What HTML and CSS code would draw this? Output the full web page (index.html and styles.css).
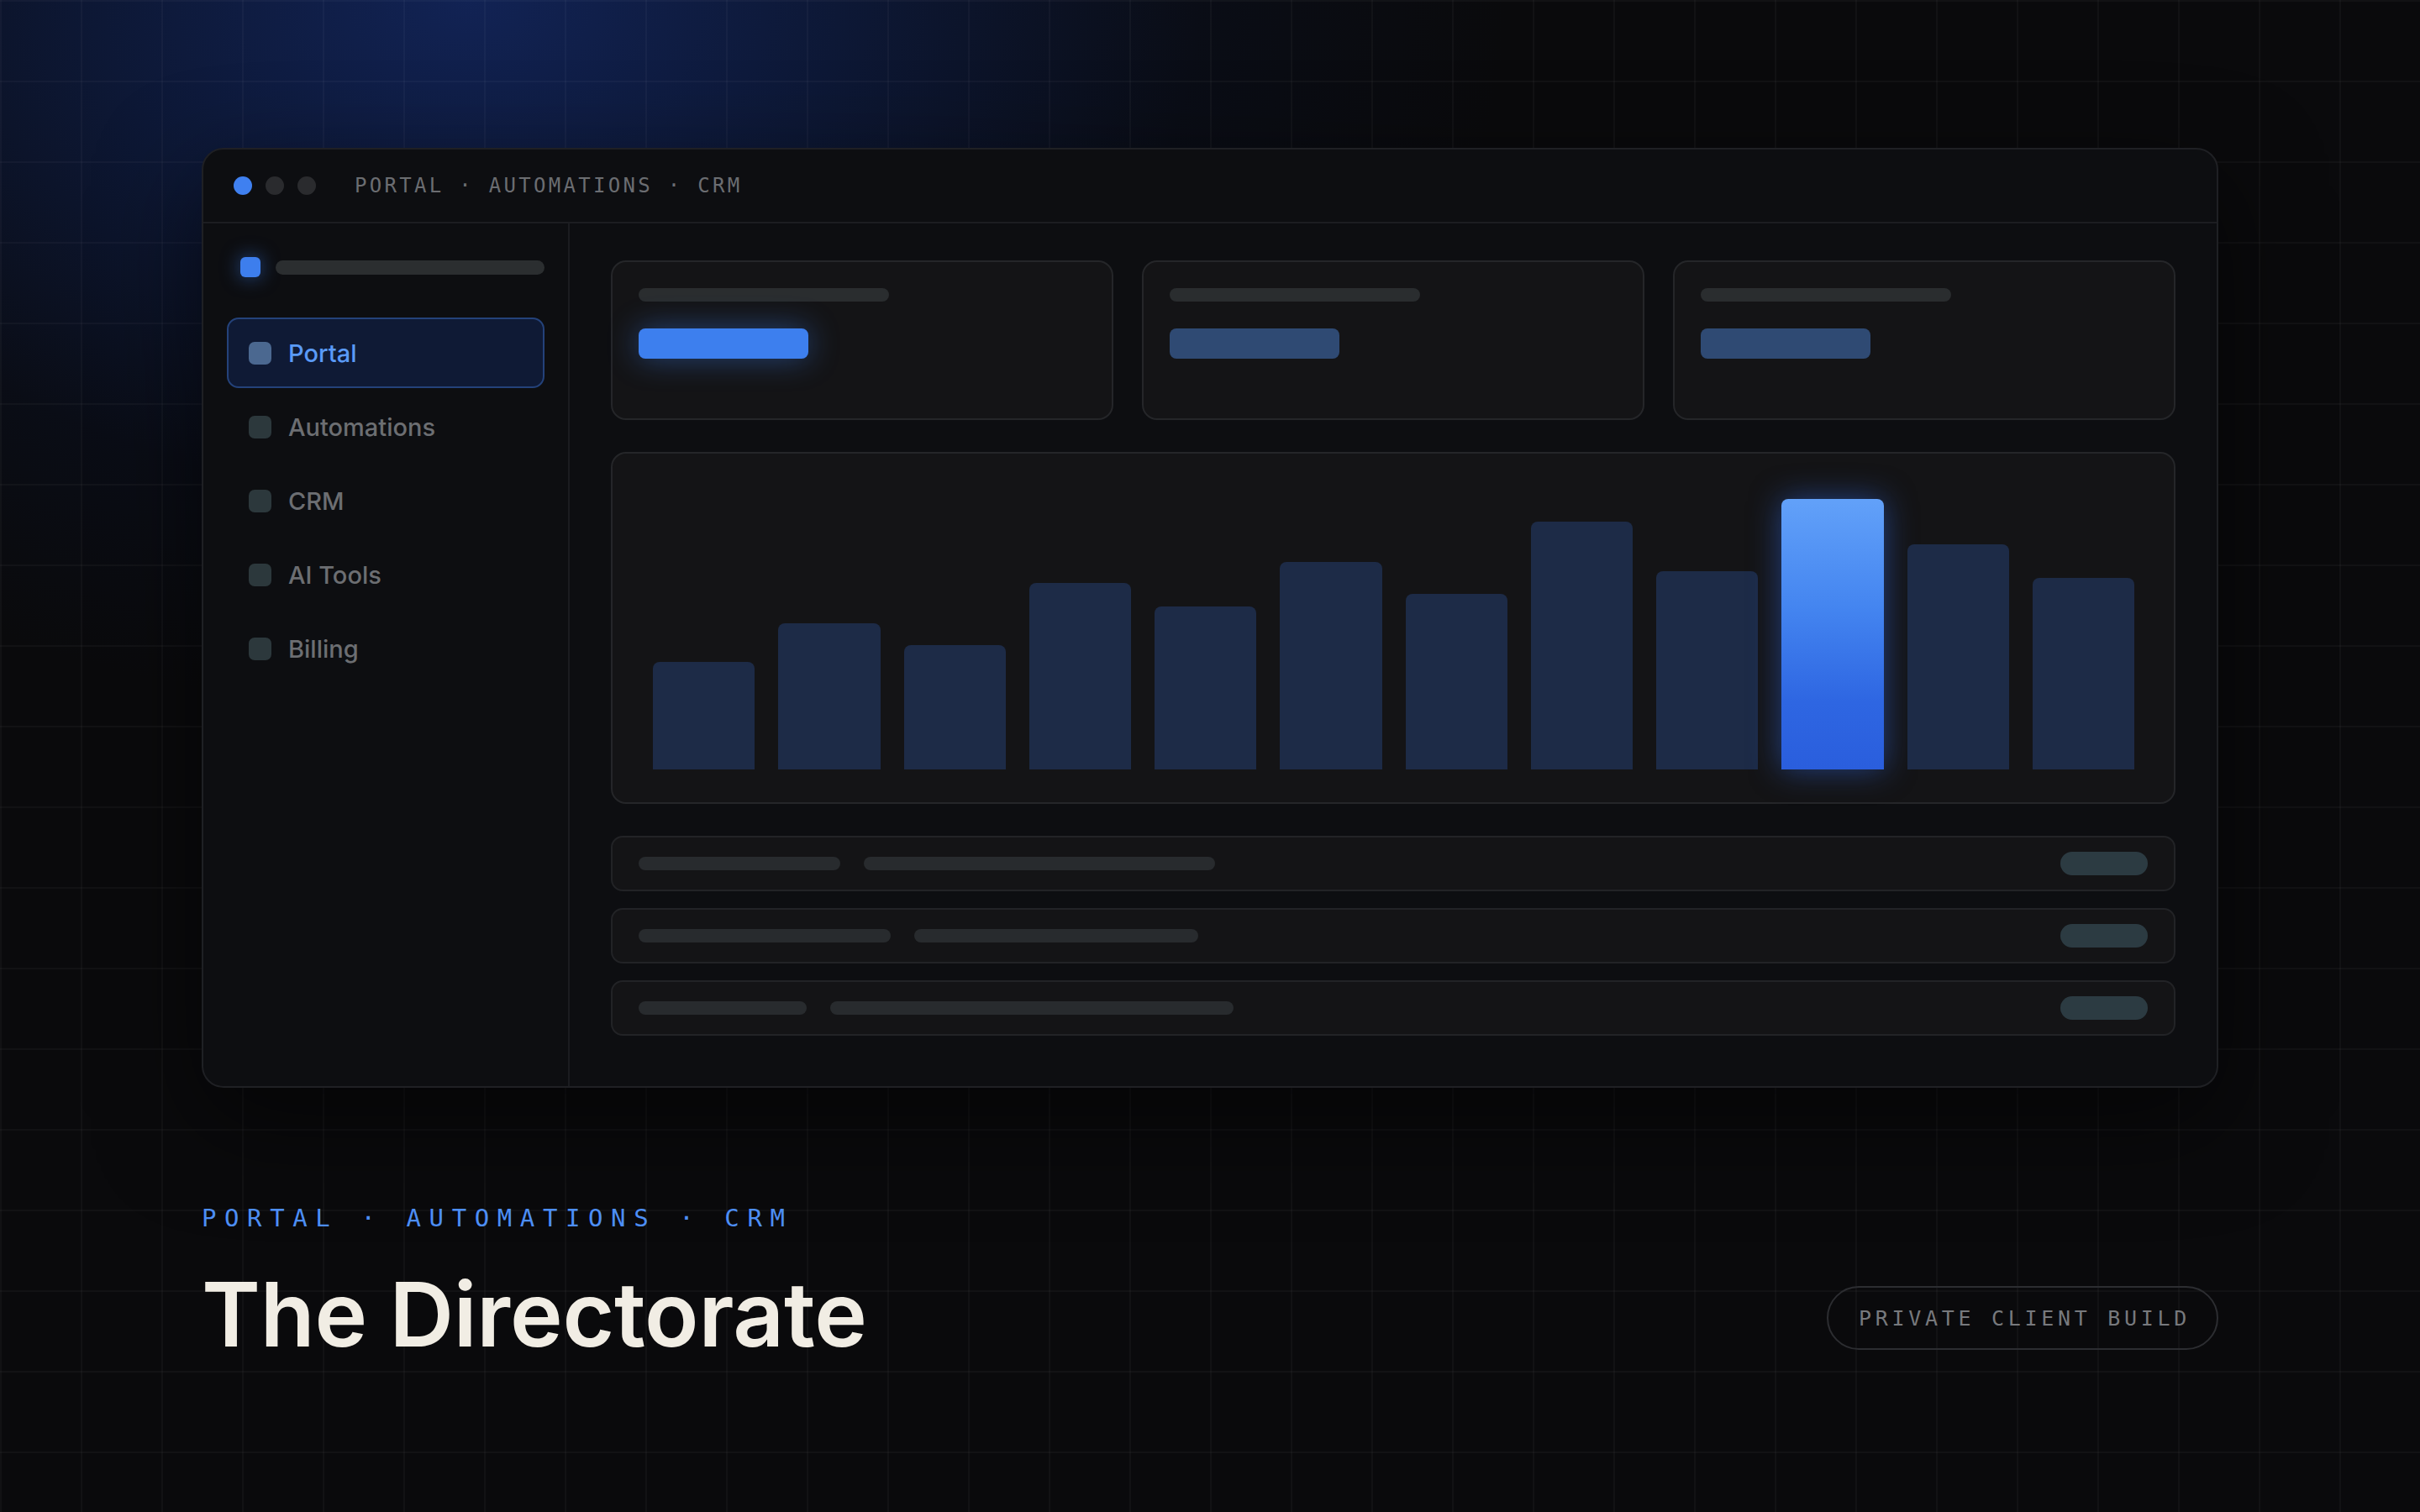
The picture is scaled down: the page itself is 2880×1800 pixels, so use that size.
FILE: index.html
```html
<!DOCTYPE html>
<html lang="en">
<head>
<meta charset="utf-8">
<title>The Directorate</title>
<link rel="stylesheet" href="styles.css">
</head>
<body>
<div class="page">
  <div class="window">
    <header class="titlebar">
      <span class="dot dot-blue"></span>
      <span class="dot"></span>
      <span class="dot"></span>
      <span class="crumbs">PORTAL · AUTOMATIONS · CRM</span>
    </header>
    <div class="window-body">
      <aside class="sidebar">
        <div class="brand"><span class="brand-mark"></span><span class="brand-bar"></span></div>
        <nav class="nav">
          <div class="nav-item active"><span class="nav-icon"></span><span class="nav-label">Portal</span></div>
          <div class="nav-item"><span class="nav-icon"></span><span class="nav-label">Automations</span></div>
          <div class="nav-item"><span class="nav-icon"></span><span class="nav-label">CRM</span></div>
          <div class="nav-item"><span class="nav-icon"></span><span class="nav-label">AI Tools</span></div>
          <div class="nav-item"><span class="nav-icon"></span><span class="nav-label">Billing</span></div>
        </nav>
      </aside>
      <main class="main">
        <div class="stats">
          <div class="stat"><span class="stat-label"></span><span class="stat-value stat-value-hot"></span></div>
          <div class="stat"><span class="stat-label"></span><span class="stat-value"></span></div>
          <div class="stat"><span class="stat-label"></span><span class="stat-value"></span></div>
        </div>
        <div class="chart">
          <div class="bars">
            <span class="bar" style="height:128px"></span>
            <span class="bar" style="height:174px"></span>
            <span class="bar" style="height:148px"></span>
            <span class="bar" style="height:222px"></span>
            <span class="bar" style="height:194px"></span>
            <span class="bar" style="height:247px"></span>
            <span class="bar" style="height:209px"></span>
            <span class="bar" style="height:295px"></span>
            <span class="bar" style="height:236px"></span>
            <span class="bar bar-hot" style="height:322px"></span>
            <span class="bar" style="height:268px"></span>
            <span class="bar" style="height:228px"></span>
          </div>
        </div>
        <div class="rows">
          <div class="row"><span class="row-bar" style="width:240px"></span><span class="row-bar" style="width:418px"></span><span class="row-pill"></span></div>
          <div class="row"><span class="row-bar" style="width:300px"></span><span class="row-bar" style="width:338px"></span><span class="row-pill"></span></div>
          <div class="row"><span class="row-bar" style="width:200px"></span><span class="row-bar" style="width:480px"></span><span class="row-pill"></span></div>
        </div>
      </main>
    </div>
  </div>

  <section class="caption">
    <div class="eyebrow">PORTAL · AUTOMATIONS · CRM</div>
    <div class="caption-row">
      <h1 class="title">The Directorate</h1>
      <div class="badge">PRIVATE CLIENT BUILD</div>
    </div>
  </section>
</div>
</body>
</html>
```

FILE: styles.css
```css
* { box-sizing: border-box; }

html, body {
  margin: 0;
  padding: 0;
}

body {
  width: 2880px;
  height: 1800px;
  overflow: hidden;
  background-color: #0a0a0c;
  background-image:
    linear-gradient(to right, rgba(255,255,255,0.032) 0, rgba(255,255,255,0.032) 2px, transparent 2px),
    linear-gradient(to bottom, rgba(255,255,255,0.032) 0, rgba(255,255,255,0.032) 2px, transparent 2px),
    radial-gradient(ellipse 1450px 1000px at 560px 0px, rgba(18,36,88,0.95) 0%, rgba(14,28,66,0.78) 30%, rgba(10,18,40,0.35) 60%, rgba(10,10,12,0) 85%);
  background-size: 96px 96px, 96px 96px, 100% 100%;
  background-repeat: repeat, repeat, no-repeat;
  font-family: "Inter", "Liberation Sans", sans-serif;
  color: #f1ede4;
}

.page {
  padding: 176px 240px 0;
}

/* ---------- window ---------- */
.window {
  background: #0d0e11;
  border: 2px solid #1f2024;
  border-radius: 26px;
  box-shadow: 0 40px 120px rgba(0,0,0,0.55);
  overflow: hidden;
}

.titlebar {
  height: 88px;
  display: flex;
  align-items: center;
  padding-left: 36px;
  border-bottom: 2px solid #1c1d21;
}

.dot {
  width: 22px;
  height: 22px;
  border-radius: 50%;
  background: #2a2b2e;
  margin-right: 16px;
}

.dot-blue { background: #3f80f0; }

.crumbs {
  margin-left: 30px;
  font-family: "DejaVu Sans Mono", "Liberation Mono", monospace;
  font-size: 24px;
  letter-spacing: 3.3px;
  color: #6b6d71;
}

.window-body {
  display: flex;
}

/* ---------- sidebar ---------- */
.sidebar {
  width: 436px;
  flex: none;
  border-right: 2px solid #1b1c20;
  padding: 34px 28px 0;
}

.brand {
  height: 36px;
  display: flex;
  align-items: center;
  padding-left: 16px;
  margin-bottom: 42px;
}

.brand-mark {
  width: 24px;
  height: 24px;
  border-radius: 6px;
  background: #3d7eed;
  box-shadow: 0 0 22px rgba(59,126,237,0.55);
  flex: none;
}

.brand-bar {
  flex: 1;
  height: 17px;
  margin-left: 18px;
  border-radius: 9px;
  background: #2b2e30;
}

.nav {
  display: flex;
  flex-direction: column;
  gap: 4px;
}

.nav-item {
  height: 84px;
  display: flex;
  align-items: center;
  padding-left: 24px;
  border: 2px solid transparent;
  border-radius: 14px;
}

.nav-item.active {
  background: #0f1a35;
  border-color: #24427a;
}

.nav-icon {
  width: 27px;
  height: 27px;
  border-radius: 7px;
  background: #2c383c;
  flex: none;
  margin-right: 20px;
}

.nav-item.active .nav-icon { background: #4b6890; }

.nav-label {
  font-family: "Inter", "Liberation Sans", sans-serif;
  font-weight: 500;
  font-size: 29px;
  letter-spacing: 0;
  color: #6c6e72;
}

.nav-item.active .nav-label { color: #5a9af7; }

/* ---------- main ---------- */
.main {
  flex: 1;
  padding: 44px 49px 60px;
  display: flex;
  flex-direction: column;
  gap: 38px;
}

.stats {
  display: flex;
  gap: 34px;
}

.stat {
  flex: 1;
  height: 190px;
  background: #141416;
  border: 2px solid #252629;
  border-radius: 18px;
  padding: 31px 31px;
  display: flex;
  flex-direction: column;
  align-items: flex-start;
}

.stat-label {
  width: 298px;
  height: 16px;
  border-radius: 8px;
  background: #2a2d2f;
}

.stat-value {
  width: 202px;
  height: 36px;
  margin-top: 32px;
  border-radius: 8px;
  background: #2f4a73;
}

.stat-value-hot {
  background: #3d7fee;
  box-shadow: 0 0 36px rgba(59,127,238,0.45);
}

.chart {
  height: 419px;
  background: #141416;
  border: 2px solid #252629;
  border-radius: 18px;
  padding: 40px 47px 39px 48px;
  display: flex;
}

.bars {
  flex: 1;
  display: flex;
  align-items: flex-end;
  gap: 28px;
}

.bar {
  flex: 1;
  background: #1d2b47;
  border-radius: 8px 8px 0 0;
}

.bar-hot {
  background: linear-gradient(to bottom, #62a1f9 0%, #4485f0 40%, #2e66e2 75%, #2a5edd 100%);
  box-shadow: 0 0 36px rgba(52,110,235,0.5);
}

.rows {
  display: flex;
  flex-direction: column;
  gap: 20px;
}

.row {
  height: 66px;
  background: #141416;
  border: 2px solid #222326;
  border-radius: 14px;
  padding: 0 31px;
  display: flex;
  align-items: center;
  gap: 28px;
}

.row-bar {
  height: 16px;
  border-radius: 8px;
  background: #282b2e;
}

.row-pill {
  margin-left: auto;
  width: 104px;
  height: 28px;
  border-radius: 14px;
  background: #2c3b42;
}

/* ---------- caption ---------- */
.caption {
  margin-top: 141px;
}

.eyebrow {
  font-family: "DejaVu Sans Mono", "Liberation Mono", monospace;
  font-size: 29px;
  line-height: 1;
  letter-spacing: 9.6px;
  color: #4d8ef5;
}

.caption-row {
  margin-top: 47px;
  display: flex;
  align-items: center;
  justify-content: space-between;
}

.title {
  margin: 0;
  font-family: "Inter", "Liberation Sans", sans-serif;
  font-weight: 600;
  font-size: 106px;
  line-height: 1;
  letter-spacing: -0.2px;
  color: #f1ede4;
}

.badge {
  height: 76px;
  margin-top: 8px;
  display: flex;
  align-items: center;
  padding: 0 31px 0 36px;
  border: 2px solid #2c2d31;
  border-radius: 38px;
  font-family: "DejaVu Sans Mono", "Liberation Mono", monospace;
  font-size: 25px;
  letter-spacing: 4.7px;
  color: #77797d;
}
```
